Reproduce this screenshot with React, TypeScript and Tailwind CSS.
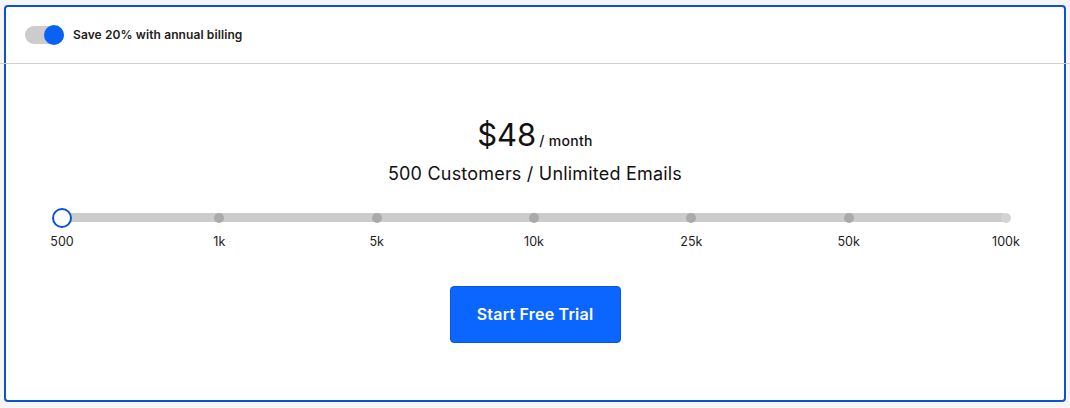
import { useState } from 'react';

const stops = ['500', '1k', '5k', '10k', '25k', '50k', '100k'];

export default function App() {
  const [annual, setAnnual] = useState(true);
  const [idx] = useState(0);

  return (
    <div className="min-h-[408px] bg-[#f6f6f6] pt-[5px] pl-[4px]" style={{ fontFamily: 'Inter, "Open Sans", sans-serif' }}>
      <div className="w-[1062px] h-[397px] bg-white border-2 border-[#0b52d6] rounded-[4px] flex flex-col">
        <div className="h-[56px] flex items-center pl-[19px] gap-[9px]">
          <button
            onClick={() => setAnnual(!annual)}
            className="relative w-[39px] h-[18px] rounded-full bg-[#cccccc]"
          >
            <span className={`absolute top-[-1px] w-[20px] h-[20px] rounded-full bg-[#0a62f5] ${annual ? 'right-0' : 'left-0'}`} />
          </button>
          <span className="text-[12px] font-semibold text-[#222] tracking-[0.1px]">Save 20% with annual billing</span>
        </div>
        <div className="h-px bg-[#cfcfcf] -ml-[6px] -mr-[6px]" />

        <div className="flex flex-col items-center pt-[53px]">
          <div className="flex items-baseline gap-[3px] text-[#111]">
            <span className="text-[31px] leading-[36px] font-normal">$48</span>
            <span className="text-[14px] font-medium tracking-[0.3px]">/ month</span>
          </div>
          <div className="mt-[10px] text-[18px] leading-[22px] text-[#111] tracking-[0.2px]">500 Customers / Unlimited Emails</div>
        </div>

        <div className="mt-[23px] pl-[56px] pr-[58px]">
          <div className="relative h-[20px]">
            <div className="absolute left-0 right-0 top-[5px] h-[9px] rounded-full bg-[#cccccc]" />
            {stops.map((s, i) => (
              <span
                key={s}
                className={`absolute top-[5px] w-[10px] h-[10px] -ml-[5px] rounded-full ${i === stops.length - 1 ? 'bg-[#d4d4d4]' : 'bg-[#aaaaaa]'}`}
                style={{ left: `${(i / (stops.length - 1)) * 100}%` }}
              />
            ))}
            <span
              className="absolute top-0 w-[20px] h-[20px] -ml-[10px] rounded-full bg-white border-2 border-[#0b52d6]"
              style={{ left: `${(idx / (stops.length - 1)) * 100}%` }}
            />
          </div>
          <div className="flex justify-between -mx-[20px] mt-[5px]">
            {stops.map((s) => (
              <span key={s} className="w-[40px] text-center text-[12.5px] text-[#222]">{s}</span>
            ))}
          </div>
        </div>

        <div className="flex justify-center mt-[34px]">
          <button className="w-[171px] h-[57px] rounded-[4px] bg-[#0a66ff] border border-[#0a55dd] text-white text-[16px] font-semibold tracking-[0.2px]">
            Start Free Trial
          </button>
        </div>
      </div>
    </div>
  );
}
